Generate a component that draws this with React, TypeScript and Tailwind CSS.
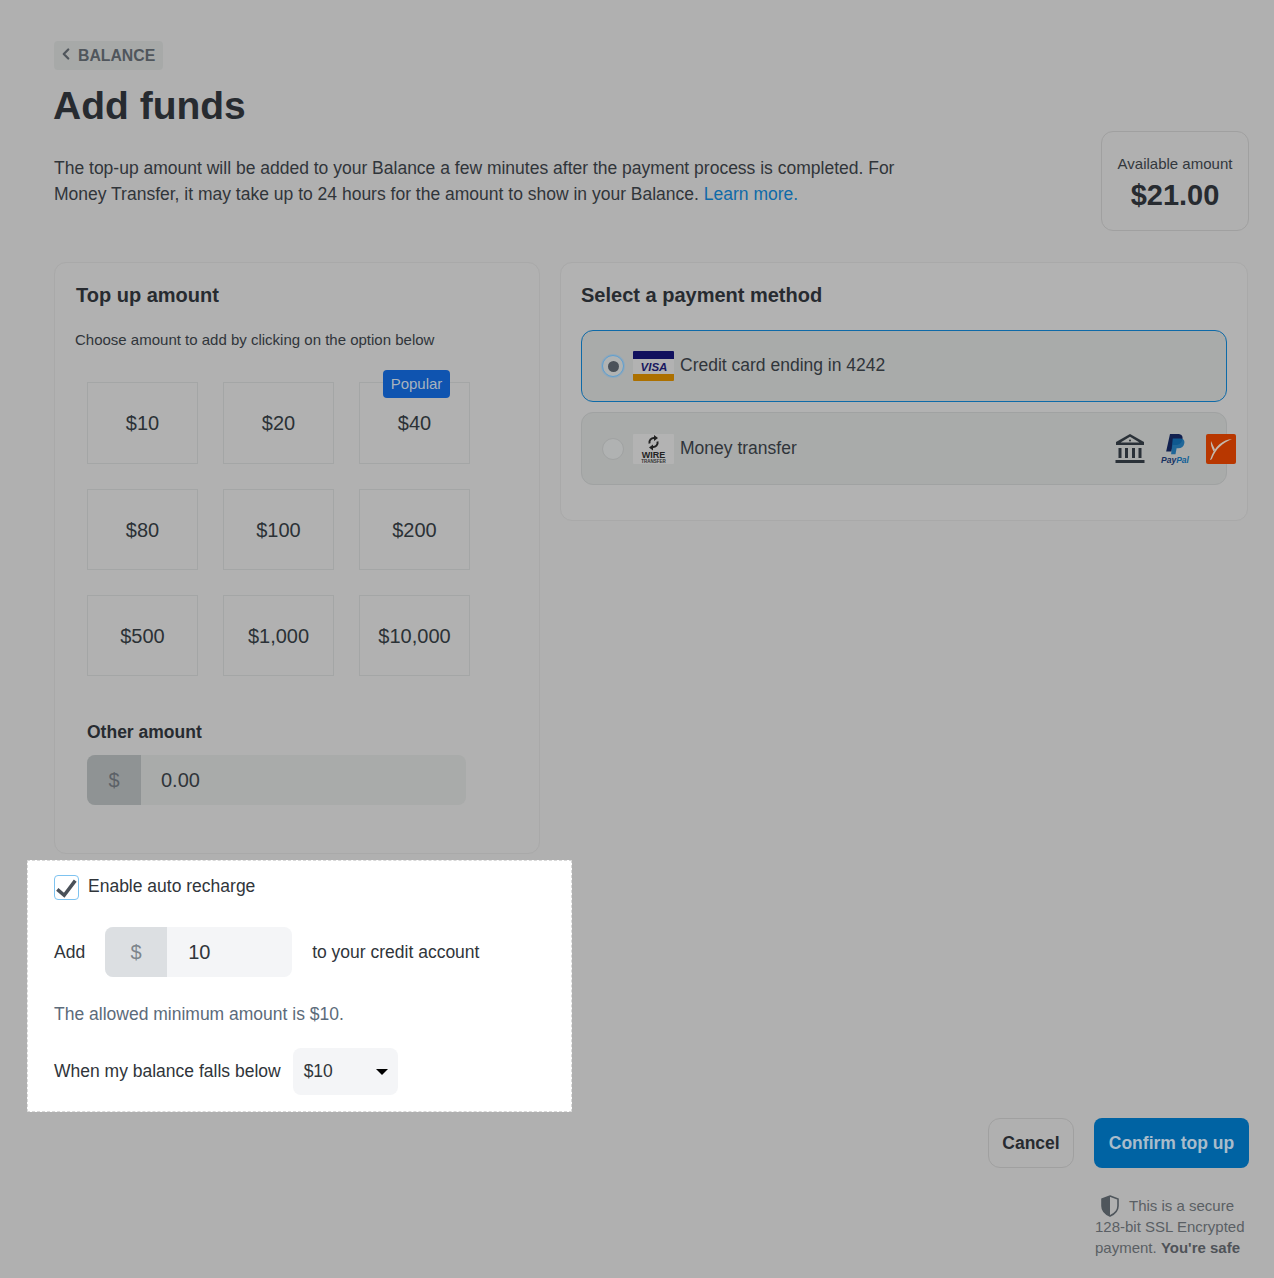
import { ChevronLeft } from "lucide-react";

const amounts = ["$10", "$20", "$40", "$80", "$100", "$200", "$500", "$1,000", "$10,000"];

const VisaIcon = () => (
  <svg width="41" height="30" viewBox="0 0 41 30" className="shrink-0">
    <rect width="41" height="30" rx="1" fill="#b2b2b2" />
    <path d="M0 8V1a1 1 0 0 1 1-1h39a1 1 0 0 1 1 1v7z" fill="#10105e" />
    <path d="M0 23h41v6a1 1 0 0 1-1 1H1a1 1 0 0 1-1-1z" fill="#ac7000" />
    <text x="21" y="19.5" textAnchor="middle" fontFamily="Liberation Sans, sans-serif" fontSize="11.5" fontWeight="700" fontStyle="italic" fill="#17175f">VISA</text>
  </svg>
);

const WireIcon = () => (
  <svg width="41" height="30" viewBox="0 0 41 30" className="shrink-0">
    <rect width="41" height="30" rx="1" fill="#b3b3b3" />
    <path d="M16.500 9.500a4.500 4.500 0 0 1 5-5.500M24.500 7.500a4.500 4.500 0 0 1-5 5.500" fill="none" stroke="#222" strokeWidth="2" />
    <path d="M21 1l4 3-4 3zM20 10.500l-4 3 4 3z" fill="#222" />
    <text x="20.500" y="24" textAnchor="middle" fontFamily="Liberation Sans, sans-serif" fontSize="9" fontWeight="700" fill="#222">WIRE</text>
    <text x="20.500" y="28.500" textAnchor="middle" fontFamily="Liberation Sans, sans-serif" fontSize="4.500" fontWeight="700" fill="#333">TRANSFER</text>
  </svg>
);

const BankIcon = () => (
  <svg width="30" height="30" viewBox="0 0 30 30" fill="#2a3138">
    <path d="M15 0L1 8v3h28V8zM15 2.800L24.500 8.500h-19z" fillRule="evenodd" />
    <circle cx="15" cy="6.500" r="1" />
    <rect x="3.500" y="14" width="3" height="10" />
    <rect x="10" y="14" width="3" height="10" />
    <rect x="17" y="14" width="3" height="10" />
    <rect x="23.500" y="14" width="3" height="10" />
    <rect x="0.500" y="26" width="29" height="3" />
  </svg>
);

const PayPalIcon = () => (
  <div className="flex w-[30px] flex-col items-center">
    <svg width="19" height="22" viewBox="0 0 17 20">
      <path d="M3.500 0h7c3.500 0 5 2 4.300 5-.8 3.500-3.300 5-6.300 5H6L4.800 16H0z" fill="#11204f" />
      <path d="M6 4h6.500c3.500 0 4.500 2 4 4.500C16 11.500 14 13 11 13H9.500l-1 5.500H4.500z" fill="#0f5f97" opacity="0.9" />
    </svg>
    <span className="text-[8.500px] leading-[8px] font-bold italic text-[#17305f]">
      Pay<span className="text-[#0f5f97]">Pal</span>
    </span>
  </div>
);

const PayoneerIcon = () => (
  <svg width="30" height="30" viewBox="0 0 30 30">
    <rect width="30" height="30" rx="2" fill="#b83700" />
    <path d="M26 5C17 6 9 11 4 26c1.500 0 2-1 2.500-2.500C10 15 16 9.500 26 5z" fill="#c4b9ad" />
    <path d="M5 7c-.5 3 .5 6.500 2.500 10.500L9 15.500C7.500 12.500 6.300 10 5 7z" fill="#c4b9ad" />
  </svg>
);

export default function App() {
  return (
    <div className="flex min-h-[1278px] w-[1274px] flex-col bg-[#b0b0b0] pt-[41px] pr-[25px] pl-[54px] font-['Liberation_Sans',Arial,sans-serif] text-[#272b30]">
      <a className="flex h-[29px] w-[109px] items-center rounded-[4px] bg-[#a7a9a8] pl-[3px] text-[15.8px] font-bold text-[#50565c]">
        <ChevronLeft size={18} strokeWidth={3} className="mt-[-4px] mr-[3px]" />
        BALANCE
      </a>
      <h1 className="mt-[12px] ml-[-1px] text-[39px] leading-[48px] font-bold text-[#272b30]">Add funds</h1>

      <div className="mt-[1px] flex items-start justify-between">
        <p className="mt-[24px] w-[850px] text-[17.5px] leading-[26px] text-[#30353a]">
          The top-up amount will be added to your Balance a few minutes after the payment process is completed. For Money Transfer, it may take up to 24 hours for the amount to show in your Balance.{" "}
          <span className="text-[#0e6aa8]">Learn more.</span>
        </p>
        <div className="flex h-[100px] w-[148px] flex-col items-center rounded-[12px] border border-[#a0a0a0] bg-[#b0b0b0] pt-[23px]">
          <span className="text-[15px] leading-[18px] text-[#33383d]">Available amount</span>
          <span className="mt-[4px] text-[29px] leading-[36px] font-bold text-[#272b30]">$21.00</span>
        </div>
      </div>

      <div className="mt-[31px] flex items-start gap-[20px]">
        <div className="h-[592px] w-[486px] rounded-[12px] border border-[#a9a9a9] bg-[#b1b1b1] pt-[20px] pl-[20px]">
          <h2 className="ml-[1px] text-[20px] leading-[24px] font-bold text-[#272b30]">Top up amount</h2>
          <p className="mt-[23px] text-[15px] leading-[20px] text-[#30353a]">Choose amount to add by clicking on the option below</p>
          <div className="mt-[32px] ml-[12px] grid w-[383px] grid-cols-3 gap-[25px]">
            {amounts.map((a, i) => (
              <div key={a} className={`relative flex items-center justify-center border border-[#a4a6a6] text-[20px] text-[#2b3136] ${i < 3 ? "h-[82px]" : "h-[81px]"}`}>
                {a === "$40" && (
                  <span className="absolute top-[-13px] left-[23px] flex h-[28px] w-[67px] items-center justify-center rounded-[4px] bg-[#0f54b0] text-[15px] text-[#a9b3bd]">Popular</span>
                )}
                {a}
              </div>
            ))}
          </div>
          <h3 className="mt-[45px] ml-[12px] text-[17.5px] leading-[22px] font-bold text-[#272b30]">Other amount</h3>
          <div className="mt-[12px] ml-[12px] flex h-[50px] w-[379px] overflow-hidden rounded-[8px] bg-[#a9abaa]">
            <div className="flex w-[54px] items-center justify-center bg-[#8f9394] text-[20px] text-[#5c6167]">$</div>
            <div className="flex items-center pl-[20px] text-[20px] text-[#30353a]">0.00</div>
          </div>
        </div>

        <div className="h-[259px] w-[688px] rounded-[12px] border border-[#a9a9a9] bg-[#b2b2b2] pt-[20px] pl-[20px]">
          <h2 className="text-[20px] leading-[24px] font-bold text-[#272b30]">Select a payment method</h2>
          <div className="mt-[23px] flex h-[72px] w-[646px] items-center rounded-[12px] border border-[#0e6aa8] bg-[#a9abaa] pl-[20px]">
            <span className="flex size-[22px] items-center justify-center rounded-full border border-[#5f9fd0] bg-[#b0b3b3] shadow-[0_0_0_1px_#8fa8bb]">
              <span className="size-[11px] rounded-full bg-[#4a5159]" />
            </span>
            <span className="mt-[-1px] mr-[6px] ml-[9px]"><VisaIcon /></span>
            <span className="mt-[-2px] text-[17.5px] text-[#30353a]">Credit card ending in 4242</span>
          </div>
          <div className="mt-[10px] flex h-[73px] w-[646px] items-center rounded-[12px] border border-[#a0a2a2] bg-[#a9abaa] pl-[20px]">
            <span className="size-[22px] rounded-full border border-[#a0a2a2] bg-[#b0b2b2]" />
            <span className="mr-[6px] ml-[9px]"><WireIcon /></span>
            <span className="text-[17.5px] text-[#30353a]">Money transfer</span>
            <div className="relative ml-auto flex h-[30px] w-[121px] translate-x-[10px] items-center">
              <span className="absolute top-0 left-0"><BankIcon /></span>
              <span className="absolute top-0 left-[45px]"><PayPalIcon /></span>
              <span className="absolute top-0 left-[91px]"><PayoneerIcon /></span>
            </div>
          </div>
        </div>
      </div>

      <div className="mt-[6px] ml-[-27px] h-[252px] w-[545px] border border-dashed border-[#d8d8d8] bg-white pt-[14px] pl-[26px]">
        <div className="flex items-center">
          <span className="flex size-[25px] items-center justify-center rounded-[4px] border border-[#7ec3f0] bg-white">
            <svg width="25" height="25" viewBox="0 0 25 25">
              <path d="M2.500 14.500l7.500 6.500L22 5" fill="none" stroke="#4a5159" strokeWidth="3.800" />
            </svg>
          </span>
          <span className="mt-[-3px] ml-[9px] text-[17.5px] leading-[24px] text-[#30353a]">Enable auto recharge</span>
        </div>
        <div className="mt-[27px] flex items-center">
          <span className="text-[17.5px] text-[#30353a]">Add</span>
          <div className="ml-[20px] flex h-[50px] w-[187px] overflow-hidden rounded-[8px] bg-[#f4f5f7]">
            <div className="flex w-[62px] items-center justify-center bg-[#dcdfe2] text-[20px] text-[#7d858c]">$</div>
            <div className="flex items-center pl-[21px] text-[20px] text-[#30353a]">10</div>
          </div>
          <span className="ml-[20px] text-[17.5px] text-[#30353a]">to your credit account</span>
        </div>
        <p className="mt-[25px] text-[17.5px] leading-[24px] text-[#5c6b7a]">The allowed minimum amount is $10.</p>
        <div className="mt-[22px] flex items-center">
          <span className="text-[17.5px] text-[#30353a]">When my balance falls below</span>
          <div className="ml-[12px] flex h-[47px] w-[105px] items-center justify-between rounded-[8px] bg-[#f4f5f7] pr-[10px] pl-[11px] text-[17.5px] text-[#30353a]">
            $10
            <span className="h-0 w-0 border-x-[6px] border-t-[6px] border-x-transparent border-t-black" />
          </div>
        </div>
      </div>

      <div className="mt-[6px] flex justify-end gap-[20px]">
        <button className="h-[50px] w-[86px] rounded-[12px] border border-[#a0a0a0] text-[17.5px] font-bold text-[#272b30]">Cancel</button>
        <button className="h-[50px] w-[155px] rounded-[8px] bg-[#0063a3] text-[17.5px] font-bold text-[#a9bccb]">Confirm top up</button>
      </div>

      <div className="mt-[27px] ml-auto w-[154px] text-[15px] leading-[20.5px] text-[#5a5f64]">
        <div className="flex items-center pl-[5px]">
          <svg width="20" height="22" viewBox="0 0 20 22" className="mr-[9px]">
            <path d="M10 1l8 3v7c0 5-3.500 8-8 10-4.500-2-8-5-8-10V4z" fill="none" stroke="#4f565c" strokeWidth="1.600" />
            <path d="M10 1L2 4v7c0 5 3.500 8 8 10z" fill="#4f565c" />
          </svg>
          This is a secure
        </div>
        128-bit SSL Encrypted payment. <b className="font-bold text-[#4f5358]">You're safe</b>
      </div>
    </div>
  );
}
